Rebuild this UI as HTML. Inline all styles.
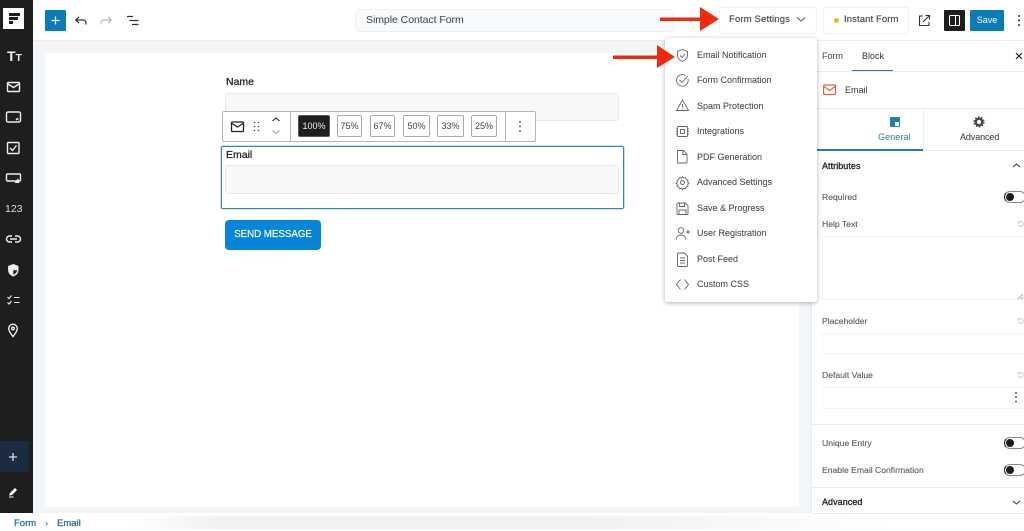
<!DOCTYPE html>
<html><head><meta charset="utf-8"><style>
html,body{margin:0;padding:0;background:#fff}
body{width:1024px;height:529px;overflow:hidden;position:relative;font-family:"Liberation Sans",sans-serif}
.a{position:absolute;box-sizing:border-box}
.t{position:absolute;white-space:nowrap;line-height:14px;height:14px}
.m{font-size:9px;color:#4b4f55;left:697px;-webkit-text-stroke:.1px #4b4f55}
.r{font-size:8.600px;color:#55595e;left:822px;-webkit-text-stroke:.1px #55595e}
.b{font-size:9px;color:#222;left:822px;-webkit-text-stroke:.3px #222;letter-spacing:.05px}
.l{font-size:10.500px;color:#1e1e1e;left:226px;-webkit-text-stroke:.25px #1e1e1e}
.f{position:absolute;box-sizing:border-box;background:#f8f8f8;border:1px solid #e9e9e9;border-radius:3px}
.i{position:absolute;box-sizing:border-box;background:#fff;border:1px solid #f3f4f5;border-radius:2px}
.d{position:absolute;left:812px;width:212px;height:1px;background:#e8eaec}
.p{position:absolute;top:115px;height:22px;box-sizing:border-box;border:1px solid #aaa;border-radius:2px;background:#fff;font-size:9px;color:#444;text-align:center;line-height:20px}
.tg{position:absolute;left:1004px;width:22px;height:12px;border:1px solid #888;border-left-color:#222;border-radius:6px;box-sizing:border-box;background:#fff}
.tg i{position:absolute;left:1px;top:1px;width:8px;height:8px;background:#1e1e1e;border-radius:50%}
svg{position:absolute;overflow:visible}
</style></head><body>

<!-- canvas -->
<div class="a" style="left:33px;top:41px;width:779px;height:472px;background:#f2f6f9"></div>
<div class="a" style="left:45px;top:53px;width:754px;height:454px;background:#fff"></div>

<!-- sidebar -->
<div class="a" style="left:0;top:0;width:33px;height:513px;background:#1e1e1e"></div>
<div class="a" style="left:3px;top:8px;width:21px;height:21px;background:#fff"></div>
<svg style="left:0;top:0" width="33" height="513" fill="none" stroke="#eee" stroke-width="1.400">
<path d="M9 13h11v3H9zM9 17h9v3H9zM9 21h4v3H9z" fill="#1e1e1e" stroke="none"/>
<rect x="7.500" y="82.500" width="12" height="9" rx="1"/><path d="M8 84l5.500 3.500L19 84"/>
<rect x="6.500" y="112" width="14" height="10" rx="1.500"/><path d="M16 120l2-2M18 120l.5-.5" />
<rect x="7.500" y="142.500" width="11.500" height="11" rx="1"/><path d="M10 148l2.500 2.500 4-5"/>
<rect x="6.500" y="174" width="14" height="7" rx="1"/><path d="M15 183l3-4 1 4" fill="#eee" stroke-width=".8"/>
<path d="M12 236h-2.500a3 3 0 0 0 0 6H12M15 236h2.500a3 3 0 0 1 0 6H15M10 239h7" stroke-width="1.400"/>
<path d="M13.300 264l5.200 2v4c0 3.500-2.500 5.500-5.200 6.500-2.700-1-5.200-3-5.200-6.500v-4z" fill="#eee" stroke="none"/><path d="M13.300 266v4.300h3.800c-.2 2.300-2 3.700-3.800 4.400z" fill="#1e1e1e" stroke="none"/>
<path d="M7.500 297l1.500 1.500 2.500-3M7.500 302.500l1.500 1.500 2.500-3M14 297.500h5.500M14 302.500h5.500" stroke-width="1.100"/>
<path d="M13 336.500c-2.500-3-4.300-5.500-4.300-8a4.300 4.300 0 0 1 8.600 0c0 2.500-1.800 5-4.300 8z"/><circle cx="13" cy="328.500" r="1.300"/>
</svg>
<div class="t" style="left:7px;top:49px;font-size:14px;font-weight:bold;color:#eee">T<span style="font-size:10px">T</span></div>
<div class="t" style="left:5px;top:202px;font-size:10.500px;color:#ddd">123</div>
<div class="a" style="left:0;top:441px;width:29px;height:31px;background:#1b2b40"></div>
<svg style="left:0;top:441px" width="29" height="31" stroke="#ddd" stroke-width="1.300"><path d="M13 12v8M9 16h8"/></svg>
<svg style="left:0;top:480px" width="30" height="30"><path d="M10 13l5-5 2 2-5 5-3 .5z" fill="#fff"/><path d="M9 17h4.500" stroke="#fff" stroke-width="1"/></svg>

<!-- topbar -->
<div class="a" style="left:33px;top:40px;width:991px;height:1px;background:#eceff1"></div>
<div class="a" style="left:45px;top:10px;width:21px;height:21px;background:#0a7cb8;border-radius:1px"></div>
<svg style="left:45px;top:10px" width="21" height="21" stroke="#fff" stroke-width="1.200"><path d="M10.500 6.500v8M6.500 10.500h8"/></svg>
<svg style="left:70px;top:10px" width="80" height="21" fill="none" stroke="#333" stroke-width="1.200">
<path d="M16 14.500v-1.500c0-2-1.500-3-3-3H6M9 6.800L5.800 10 9 13"/>
<path d="M31 14.500v-1.500c0-2 1.500-3 3-3h7M38 6.800L41.200 10 38 13" stroke="#b5b8bb"/>
<path d="M57 6.500h6M59.500 10.500h9M62 14.500h6.500" stroke="#333"/></svg>
<div class="a" style="left:355px;top:9px;width:319px;height:23px;background:#f8fafb;border:1px solid #eff2f4;border-radius:4px"></div>
<div class="t" style="left:366px;top:13px;font-size:10.500px;color:#3c3f44;letter-spacing:-.05px">Simple Contact Form</div>

<div class="a" style="left:719px;top:7px;width:98px;height:27px;background:#fff;border:1px solid #eef0f2;border-radius:3px"></div>
<div class="t" style="left:729px;top:13px;font-size:9.500px;color:#4b4f55;letter-spacing:.15px;-webkit-text-stroke:.2px #4b4f55">Form Settings</div>
<svg style="left:795px;top:15px" width="12" height="10" fill="none" stroke="#555" stroke-width="1"><path d="M2 2.500l4 3.500 4-3.500"/></svg>
<div class="a" style="left:823px;top:7px;width:86px;height:27px;background:#fff;border:1px solid #eef0f2;border-radius:3px"></div>
<div class="a" style="left:834px;top:18px;width:5px;height:5px;border-radius:50%;background:#e6bf1c"></div>
<div class="t" style="left:844px;top:13px;font-size:9.500px;color:#4b4f55;letter-spacing:.1px;-webkit-text-stroke:.2px #4b4f55">Instant Form</div>
<svg style="left:918px;top:14px" width="13" height="13" fill="none" stroke="#333" stroke-width="1.100"><path d="M5 2H1.500v9.500H11V8M5 8l6-6M7.500 1.500h4v4"/></svg>
<div class="a" style="left:944px;top:10px;width:21px;height:21px;background:#1e1e1e;border-radius:1px"></div>
<svg style="left:944px;top:10px" width="21" height="21" fill="none" stroke="#fff" stroke-width="1"><rect x="5.500" y="5.500" width="10" height="10" rx="1"/><path d="M11.500 5.500v10"/></svg>
<div class="a" style="left:970px;top:10px;width:34px;height:21px;background:#0a7cb8;border-radius:1px;color:#fff;font-size:9px;text-align:center;line-height:21px">Save</div>
<svg style="left:1016px;top:14px" width="6" height="14" fill="#333"><circle cx="3" cy="2" r="1"/><circle cx="3" cy="6.500" r="1"/><circle cx="3" cy="11" r="1"/></svg>

<!-- form -->
<div class="t l" style="top:75px">Name</div>
<div class="f" style="left:225px;top:93px;width:394px;height:28px"></div>
<div class="a" style="left:221px;top:146px;width:403px;height:63px;border:1px solid #3a87a3;box-shadow:0 0 0 1px rgba(100,170,190,.35);border-radius:2px;background:#fff"></div>
<div class="t l" style="top:148px">Email</div>
<div class="f" style="left:225px;top:165px;width:394px;height:29px"></div>
<div class="a" style="left:225px;top:220px;width:96px;height:30px;background:#0785d8;border-radius:4px;color:#fff;font-size:9.800px;text-align:center;line-height:30px;letter-spacing:-.05px;-webkit-text-stroke:.15px #fff">SEND MESSAGE</div>

<!-- block toolbar -->
<div class="a" style="left:222px;top:111px;width:314px;height:31px;background:#fff;border:1px solid #b5b5b5;border-radius:2px"></div>
<div class="a" style="left:290px;top:111px;width:1px;height:31px;background:#b5b5b5"></div>
<div class="a" style="left:505px;top:111px;width:1px;height:31px;background:#b5b5b5"></div>
<svg style="left:222px;top:111px" width="70" height="31" fill="none" stroke="#222" stroke-width="1.300">
<rect x="9.500" y="11" width="12" height="9.500" rx="1"/><path d="M10 12.500l5.500 3.500 5.500-3.500"/>
<g fill="#444" stroke="none"><circle cx="32.500" cy="11.500" r=".8"/><circle cx="36.500" cy="11.500" r=".8"/><circle cx="32.500" cy="15.500" r=".8"/><circle cx="36.500" cy="15.500" r=".8"/><circle cx="32.500" cy="19.500" r=".8"/><circle cx="36.500" cy="19.500" r=".8"/></g>
<path d="M50.500 10l3.500-3 3.500 3" stroke-width="1.100"/><path d="M50.500 19.500l3.500 3 3.500-3" stroke="#999" stroke-width="1"/></svg>
<div class="p" style="left:298px;width:32px;background:#1e1e1e;border-color:#555;color:#eee">100%</div>
<div class="p" style="left:337px;width:25px">75%</div>
<div class="p" style="left:370px;width:25px">67%</div>
<div class="p" style="left:403px;width:27px">50%</div>
<div class="p" style="left:437px;width:27px">33%</div>
<div class="p" style="left:471px;width:26px">25%</div>
<svg style="left:517px;top:120px" width="6" height="14" fill="#333"><circle cx="3" cy="2" r=".9"/><circle cx="3" cy="6.500" r=".9"/><circle cx="3" cy="11" r=".9"/></svg>

<!-- right panel -->
<div class="a" style="left:811px;top:41px;width:213px;height:472px;background:#fff;border-left:1px solid #e8eaec"></div>
<div class="t" style="left:822px;top:49px;font-size:9px;color:#444">Form</div>
<div class="t" style="left:862px;top:49px;font-size:9px;color:#333">Block</div>
<div class="a" style="left:852px;top:70px;width:41px;height:1px;background:#2a7ea8"></div>
<svg style="left:1015px;top:52px" width="8" height="8" stroke="#222" stroke-width="1.200"><path d="M1 1l6 6M7 1L1 7"/></svg>
<div class="d" style="top:71px"></div>
<svg style="left:823px;top:84px" width="14" height="12" fill="none" stroke="#d9663a" stroke-width="1.200"><rect x=".6" y="1" width="12" height="9.500" rx="1"/><path d="M1 2.500l5.600 4 5.600-4"/></svg>
<div class="t" style="left:845px;top:83px;font-size:9px;color:#333">Email</div>
<div class="d" style="top:108px"></div>
<div class="a" style="left:923px;top:108px;width:1px;height:42px;background:#eceeef"></div>
<div class="a" style="left:812px;top:149px;width:111px;height:2px;background:#1f80b4"></div>
<div class="a" style="left:924px;top:150px;width:100px;height:1px;background:#e8eaec"></div>
<div class="a" style="left:890px;top:117px;width:10px;height:10px;background:#1f80b4;border-radius:1px"></div>
<div class="a" style="left:895px;top:122px;width:4px;height:4px;background:#fff"></div>
<div class="t" style="left:878px;top:130px;font-size:9px;color:#2a80ad;letter-spacing:.1px">General</div>
<svg style="left:973px;top:116px" width="12" height="12" fill="none"><circle cx="6" cy="6" r="3.300" stroke="#444" stroke-width="2.400"/><circle cx="6" cy="6" r="5" stroke="#444" stroke-width="1.200" stroke-dasharray="1.600 1.600"/></svg>
<div class="t" style="left:960px;top:130px;font-size:9px;color:#333;letter-spacing:-.1px">Advanced</div>
<div class="t b" style="top:159px">Attributes</div>
<svg style="left:1012px;top:162px" width="9" height="7" fill="none" stroke="#333" stroke-width="1"><path d="M1 5l3.500-3L8 5"/></svg>
<div class="t r" style="top:190px">Required</div>
<div class="tg" style="top:191px"><i></i></div>
<div class="t r" style="top:217px">Help Text</div>
<svg style="left:1017px;top:220px" width="7" height="8" fill="none" stroke="#ccc"><path d="M2 2a2.500 2.500 0 1 1-.5 3M1 1v2h2"/></svg>
<div class="i" style="left:822px;top:236px;width:204px;height:64px"></div>
<svg style="left:1017px;top:293px" width="7" height="7" stroke="#888" stroke-width=".7"><path d="M1 6l5-5M4 6l2-2"/></svg>
<div class="t r" style="top:314px">Placeholder</div>
<svg style="left:1017px;top:317px" width="7" height="8" fill="none" stroke="#ccc"><path d="M2 2a2.500 2.500 0 1 1-.5 3M1 1v2h2"/></svg>
<div class="i" style="left:822px;top:333px;width:204px;height:21px"></div>
<div class="t r" style="top:368px">Default Value</div>
<svg style="left:1017px;top:371px" width="7" height="8" fill="none" stroke="#ccc"><path d="M2 2a2.500 2.500 0 1 1-.5 3M1 1v2h2"/></svg>
<div class="i" style="left:822px;top:387px;width:204px;height:22px"></div>
<svg style="left:1013px;top:391px" width="6" height="13" fill="#222"><circle cx="3" cy="2" r=".9"/><circle cx="3" cy="6" r=".9"/><circle cx="3" cy="10.500" r=".9"/></svg>
<div class="d" style="top:424px"></div>
<div class="t r" style="top:436px">Unique Entry</div>
<div class="tg" style="top:437px"><i></i></div>
<div class="t r" style="top:463px">Enable Email Confirmation</div>
<div class="tg" style="top:464px"><i></i></div>
<div class="d" style="top:487px"></div>
<div class="t b" style="top:495px">Advanced</div>
<svg style="left:1012px;top:499px" width="9" height="7" fill="none" stroke="#333" stroke-width="1"><path d="M1 2l3.500 3L8 2"/></svg>
<div class="d" style="top:513px"></div>

<!-- dropdown -->
<div class="a" style="left:665px;top:38px;width:152px;height:264px;background:#fff;border-radius:3px;box-shadow:0 1px 5px rgba(0,0,0,.3)"></div>
<svg style="left:665px;top:38px" width="34" height="264" fill="none" stroke="#666" stroke-width=".9">
<path d="M17.500 11.500l5 1.800v4c0 3.200-2.200 5-5 6.200-2.800-1.200-5-3-5-6.200v-4z"/><path d="M15 17.500l2 2 3-3.500" stroke-width=".9"/>
<path d="M23 41a5.800 5.800 0 1 1-2.500-3.500"/><path d="M14.500 42l2.500 2.500 6-6.500"/>
<path d="M17.500 62l6 10.500h-12zM17.500 66v3.500M17.500 70.500v.8"/>
<rect x="12.500" y="88.500" width="10" height="10" rx="1"/><rect x="15.500" y="91.500" width="4" height="4"/><path d="M11 91h1.500M11 93.500h1.500M11 96h1.500M22.500 91H24M22.500 93.500H24M22.500 96H24"/>
<path d="M13 112.500h5.500l3.500 3.500v8.500a.5.500 0 0 1-.5.500H13a.5.500 0 0 1-.5-.5v-12zM18 112.500V116.500h4"/>
<circle cx="17.500" cy="144.500" r="2"/><path d="M17.500 138.500l1 1.500 2-.3.8 1.700 1.700.8-.3 2 1.200 1-1.200 1 .3 2-1.700.8-.8 1.700-2-.3-1 1.500-1-1.500-2 .3-.8-1.700-1.700-.8.3-2-1.200-1 1.200-1-.3-2 1.700-.8.800-1.700 2 .3z"/>
<path d="M13 165h7.500l2.500 2.500v8a1 1 0 0 1-1 1h-9a1 1 0 0 1-1-1v-9.500a1 1 0 0 1 1-1zM14.500 165v3.500h5V165M14 176.500V172h7v4.500"/>
<circle cx="16" cy="192.500" r="2.800"/><path d="M11.500 201.500c0-3 2-4.500 4.500-4.500s4.500 1.500 4.500 4.500M21 194h4M23 192v4"/>
<path d="M13.500 215h6l3 3v9.500a1 1 0 0 1-1 1h-8a1 1 0 0 1-1-1V216a1 1 0 0 1 1-1zM15 220h5M15 222.500h5M15 225h5"/>
<path d="M15.500 241.500l-4 5 4 5M19.500 241.500l4 5-4 5"/>
</svg>
<div class="t m" style="top:48px">Email Notification</div>
<div class="t m" style="top:73px">Form Confirmation</div>
<div class="t m" style="top:99px">Spam Protection</div>
<div class="t m" style="top:124px">Integrations</div>
<div class="t m" style="top:150px">PDF Generation</div>
<div class="t m" style="top:175px">Advanced Settings</div>
<div class="t m" style="top:201px">Save &amp; Progress</div>
<div class="t m" style="top:226px">User Registration</div>
<div class="t m" style="top:252px">Post Feed</div>
<div class="t m" style="top:277px">Custom CSS</div>

<!-- arrows -->
<svg style="left:0;top:0" width="1024" height="100" fill="#f0290f">
<path d="M660 17.500h40V7l19 12-19 12V21h-40z"/>
<path d="M613 55.500h44V45l18 12-18 11V59h-44z"/></svg>

<!-- breadcrumb -->
<div class="a" style="left:130px;top:516px;width:760px;height:13px;background:linear-gradient(90deg,#fff,#f1f1f1 12%,#f1f1f1 60%,#fff)"></div>
<div class="t" style="left:14px;top:517px;font-size:9.500px;color:#2b6f99;-webkit-text-stroke:.25px #2b6f99">Form</div>
<div class="t" style="left:45px;top:517px;font-size:9.500px;color:#2b6f99">›</div>
<div class="t" style="left:57px;top:517px;font-size:9.500px;color:#2b6f99;-webkit-text-stroke:.25px #2b6f99">Email</div>
</body></html>
